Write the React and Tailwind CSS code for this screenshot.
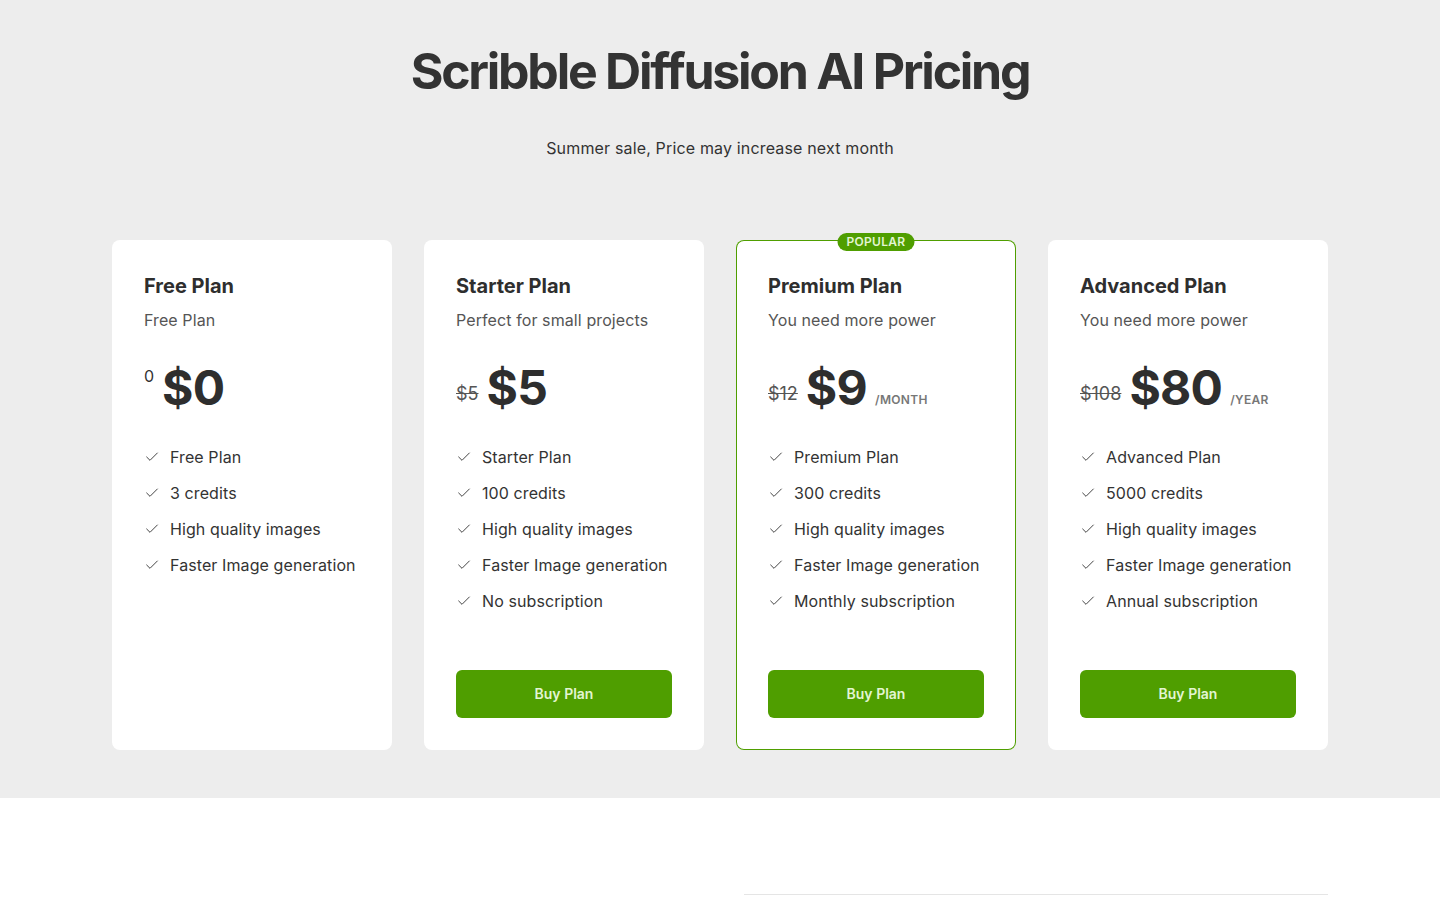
import { Check } from "lucide-react";

const plans = [
    {
        name: "Free Plan",
        description: "Free Plan",
        old: "0",
        price: "$0",
        free: true,
        features: ["Free Plan", "3 credits", "High quality images", "Faster Image generation"],
    },
    {
        name: "Starter Plan",
        description: "Perfect for small projects",
        old: "$5",
        price: "$5",
        features: ["Starter Plan", "100 credits", "High quality images", "Faster Image generation", "No subscription"],
    },
    {
        name: "Premium Plan",
        description: "You need more power",
        old: "$12",
        price: "$9",
        period: "/month",
        popular: true,
        features: ["Premium Plan", "300 credits", "High quality images", "Faster Image generation", "Monthly subscription"],
    },
    {
        name: "Advanced Plan",
        description: "You need more power",
        old: "$108",
        price: "$80",
        period: "/year",
        features: ["Advanced Plan", "5000 credits", "High quality images", "Faster Image generation", "Annual subscription"],
    },
];

function PlanCard({ plan }) {
    return (
        <div
            className={`relative flex flex-col rounded-lg bg-white p-8 ${plan.popular ? "ring-1 ring-inset ring-[#4f9e00]" : ""}`}
        >
            {/* Badge */}
            {plan.popular && (
                <span className="absolute -top-[7px] left-1/2 -translate-x-1/2 rounded-full bg-[#4f9e00] px-[9px] text-[12px] font-semibold leading-[18px] tracking-wide text-[#e3f5d2] uppercase">
                    Popular
                </span>
            )}

            <h2 className="text-[20px] font-bold leading-7 text-[#2e2e2e]">{plan.name}</h2>
            <p className="mt-2 text-base leading-6 tracking-[0.006em] text-[#555]">{plan.description}</p>

            {/* Price */}
            <div className="mt-8 flex items-end gap-2">
                {plan.free ? (
                    <span className="self-start text-base leading-6 text-[#333]">{plan.old}</span>
                ) : (
                    <span className="mb-[9px] text-[18px] leading-[18px] text-[#555] line-through">{plan.old}</span>
                )}
                <span className="text-[48px] font-bold leading-none tracking-[-0.015em] text-[#2e2e2e]">{plan.price}</span>
                {plan.period && (
                    <span className="mb-[6px] text-[12px] font-semibold leading-none tracking-wide text-[#777] uppercase">
                        {plan.period}
                    </span>
                )}
            </div>

            {/* Features */}
            <ul className="mt-[33px] flex flex-col gap-3">
                {plan.features.map((f) => (
                    <li key={f} className="flex items-center gap-2.5 text-base leading-6 tracking-[0.006em] text-[#333]">
                        <Check className="h-4 w-4 text-[#444]" strokeWidth={1.5} />
                        {f}
                    </li>
                ))}
            </ul>

            {!plan.free && (
                <button className="mt-auto h-12 w-full rounded-md bg-[#4f9e00] text-sm font-semibold text-[#e3f5d2]">
                    Buy Plan
                </button>
            )}
        </div>
    );
}

export default function App() {
    return (
        <div className="min-h-screen bg-white font-['Inter','Liberation_Sans',sans-serif]">
            <section className="bg-[#ededed] pt-[46px] pb-12">
                <div className="mx-auto max-w-7xl px-8">
                    <h1 className="text-center text-[50px] font-bold leading-none tracking-[-0.045em] text-[#333]">
                        Scribble Diffusion AI Pricing
                    </h1>
                    <p className="mt-10 text-center text-base leading-6 tracking-[0.01em] text-[#333]">
                        Summer sale, Price may increase next month
                    </p>

                    <div className="mt-20 grid h-[510px] grid-cols-4 gap-8">
                        {plans.map((p) => (
                            <PlanCard key={p.name} plan={p} />
                        ))}
                    </div>
                </div>
            </section>

            <section className="pt-24">
                <div className="mx-auto grid max-w-7xl grid-cols-2 gap-12 px-8">
                    <div />
                    <div className="border-t border-[#e5e5e5] pt-8" />
                </div>
            </section>
        </div>
    );
}
